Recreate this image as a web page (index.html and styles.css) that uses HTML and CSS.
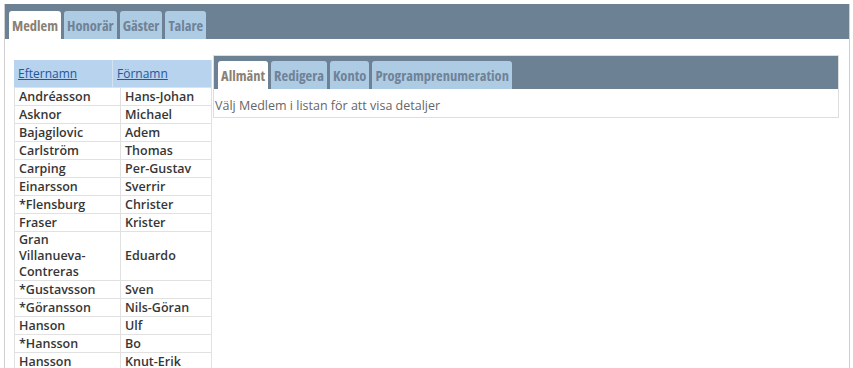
FILE: index.html
```html
<!DOCTYPE html>
<html lang="sv">
<head>
<meta charset="utf-8">
<title>Medlemmar</title>
<link rel="stylesheet" href="styles.css">
</head>
<body>
<div class="app">
  <div class="topbar">
    <a class="tab active">Medlem</a>
    <a class="tab">Honorär</a>
    <a class="tab">Gäster</a>
    <a class="tab">Talare</a>
  </div>
  <div class="content">
    <div class="list">
      <table class="list-head">
        <tr><th><a href="#">Efternamn</a></th><th><a href="#">Förnamn</a></th></tr>
      </table>
      <table class="list-body">
        <tr><td>Andréasson</td><td>Hans-Johan</td></tr>
        <tr><td>Asknor</td><td>Michael</td></tr>
        <tr><td>Bajagilovic</td><td>Adem</td></tr>
        <tr><td>Carlström</td><td>Thomas</td></tr>
        <tr><td>Carping</td><td>Per-Gustav</td></tr>
        <tr><td>Einarsson</td><td>Sverrir</td></tr>
        <tr><td>*Flensburg</td><td>Christer</td></tr>
        <tr><td>Fraser</td><td>Krister</td></tr>
        <tr><td>Gran Villanueva-Contreras</td><td>Eduardo</td></tr>
        <tr><td>*Gustavsson</td><td>Sven</td></tr>
        <tr><td>*Göransson</td><td>Nils-Göran</td></tr>
        <tr><td>Hanson</td><td>Ulf</td></tr>
        <tr><td>*Hansson</td><td>Bo</td></tr>
        <tr><td>Hansson</td><td>Knut-Erik</td></tr>
      </table>
    </div>
    <div class="panel">
      <div class="panel-bar">
        <a class="tab active">Allmänt</a>
        <a class="tab">Redigera</a>
        <a class="tab">Konto</a>
        <a class="tab">Programprenumeration</a>
      </div>
      <div class="panel-body">Välj Medlem i listan för att visa detaljer</div>
    </div>
  </div>
</div>
</body>
</html>
```
FILE: styles.css
```css
html, body {
  margin: 0;
  padding: 0;
  background: #ffffff;
}
body {
  font-family: "Open Sans", "Liberation Sans", sans-serif;
  font-size: 12px;
  color: #333;
}
.app {
  margin: 4px 3px 0 4px;
  border: 1px solid #cfcfcf;
  border-top: none;
  min-height: 400px;
}
.topbar {
  background: #6d8195;
  height: 35px;
  display: flex;
  align-items: flex-end;
  gap: 3px;
  padding-left: 4px;
  box-sizing: border-box;
}
.tab {
  display: block;
  height: 28px;
  line-height: 29px;
  padding: 0 3px;
  background: #aecbe4;
  color: #6f8296;
  font-family: "Open Sans", "DejaVu Sans Condensed", sans-serif;
  font-stretch: 75%;
  font-weight: 700;
  font-size: 14.5px;
  border-radius: 3px 3px 0 0;
  box-sizing: border-box;
  text-decoration: none;
}
.tab.active {
  background: #ffffff;
  color: #8a8073;
}
.content {
  display: flex;
  align-items: flex-start;
  padding: 16px 10px 0 9px;
}
.list {
  margin-top: 5px;
  width: 198px;
  flex: none;
}
.list table {
  border-collapse: collapse;
  width: 198px;
  table-layout: fixed;
}
.list th {
  background: #b7d3ed;
  height: 27px;
  text-align: left;
  font-weight: 400;
  padding: 0 4px;
  border-right: 1px solid #d4e3f1;
  font-size: 12px;
  width: 50%;
}
.list th a {
  color: #1e58a0;
  text-decoration: underline;
}
.list td {
  border: 1px solid #e1e1e1;
  padding: 0 4px;
  line-height: 16px;
  height: 17px;
  font-weight: 600;
  font-size: 12.5px;
  color: #363636;
  vertical-align: middle;
}
.list td:first-child {
  width: 97px;
}
.panel {
  flex: 1;
  margin-left: 1px;
  border: 1px solid #dedede;
}
.panel-bar {
  background: #6d8195;
  height: 33px;
  display: flex;
  align-items: flex-end;
  gap: 3px;
  padding-left: 4px;
  box-sizing: border-box;
}
.panel-body {
  padding: 7px 1px 2px 1px;
  color: #666;
  font-size: 12.5px;
  line-height: 19px;
}
```
